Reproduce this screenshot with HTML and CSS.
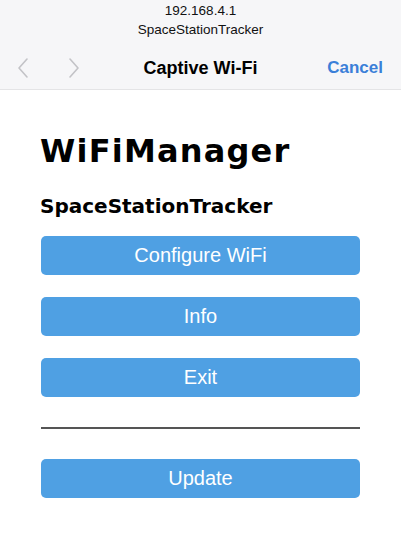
FILE: index.html
```html
<!DOCTYPE html>
<html>
<head>
<meta charset="utf-8">
<link rel="stylesheet" href="styles.css">
</head>
<body>
<header class="bar">
  <div class="addr">
    <div class="ip">192.168.4.1</div>
    <div class="ssid">SpaceStationTracker</div>
  </div>
  <div class="nav">
    <div class="arrows">
      <svg class="chev" width="14" height="22" viewBox="0 0 14 22"><polyline points="11,2 3,11 11,20" fill="none" stroke="#c3c3c7" stroke-width="1.6" stroke-linecap="round" stroke-linejoin="round"/></svg>
      <svg class="chev" width="14" height="22" viewBox="0 0 14 22"><polyline points="3,2 11,11 3,20" fill="none" stroke="#c3c3c7" stroke-width="1.6" stroke-linecap="round" stroke-linejoin="round"/></svg>
    </div>
    <div class="title">Captive Wi-Fi</div>
    <div class="cancel">Cancel</div>
  </div>
</header>
<main class="page">
  <h1 class="h1">WiFiManager</h1>
  <h3 class="h3">SpaceStationTracker</h3>
  <div class="btn">Configure WiFi</div>
  <div class="btn">Info</div>
  <div class="btn">Exit</div>
  <hr class="rule">
  <div class="btn">Update</div>
</main>
</body>
</html>
```
FILE: styles.css
```css
html, body {
  margin: 0;
  padding: 0;
  background: #fff;
}
body {
  font-family: "Liberation Sans", Arial, sans-serif;
}
.bar {
  height: 89px;
  background: #f6f6f8;
  border-bottom: 1px solid #e4e4e6;
  box-sizing: content-box;
}
.addr {
  padding-top: 1px;
  text-align: center;
  font-size: 13.5px;
  line-height: 19px;
  color: #111;
}
.nav {
  display: flex;
  align-items: center;
  height: 42px;
  margin-top: 8px;
  padding: 0 18px 0 16px;
  position: relative;
}
.arrows {
  display: flex;
  gap: 37px;
  align-items: center;
}
.chev {
  display: block;
}
.title {
  position: absolute;
  left: 0;
  right: 0;
  text-align: center;
  font-size: 18px;
  font-weight: bold;
  color: #000;
  pointer-events: none;
}
.cancel {
  margin-left: auto;
  font-size: 17px;
  font-weight: bold;
  color: #3b7fd8;
}
.page {
  padding: 0 41px;
  display: flex;
  flex-direction: column;
}
.h1 {
  margin: 42px 0 0 -1px;
  font-family: "DejaVu Sans", Verdana, sans-serif;
  font-weight: bold;
  font-size: 32px;
  line-height: 38px;
  letter-spacing: 1.2px;
  color: #000;
}
.h3 {
  margin: 24px 0 18px -1px;
  font-family: "DejaVu Sans", Verdana, sans-serif;
  font-weight: bold;
  font-size: 20px;
  line-height: 24px;
  color: #000;
}
.btn {
  height: 39px;
  line-height: 39px;
  background: #4fa0e3;
  border-radius: 5px;
  color: #fff;
  text-align: center;
  font-size: 20px;
  margin-bottom: 22px;
}
.rule {
  margin: 8px 0 30px;
  border: 0;
  border-top: 2px solid #555;
  height: 0;
}
```
